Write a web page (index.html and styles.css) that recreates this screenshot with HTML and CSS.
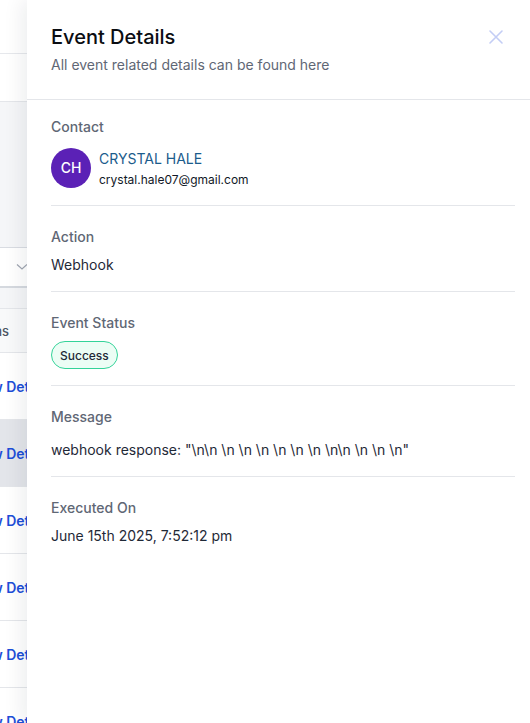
FILE: index.html
```html
<!DOCTYPE html>
<html>
<head>
<meta charset="utf-8">
<link rel="stylesheet" href="styles.css">
</head>
<body>
<div class="page">
  <div class="bg">
    <div class="bg-top"></div>
    <div class="bg-filter"></div>
    <div class="bg-gray"></div>
    <div class="bg-select">
      <svg class="chev" width="12" height="8" viewBox="0 0 12 8"><path d="M1 1.5 L6 6 L11 1.5" fill="none" stroke="#a0a6b1" stroke-width="1.2"/></svg>
    </div>
    <div class="bg-band"></div>
    <div class="bg-head"><span class="th">Actions</span></div>
    <div class="bg-row"><span class="link">View Details</span></div>
    <div class="bg-row hover"><span class="link">View Details</span></div>
    <div class="bg-row"><span class="link">View Details</span></div>
    <div class="bg-row"><span class="link">View Details</span></div>
    <div class="bg-row"><span class="link">View Details</span></div>
    <div class="bg-row"><span class="link">View Details</span></div>
  </div>
  <div class="panel">
    <div class="header">
      <div class="header-text">
        <div class="title">Event Details</div>
        <div class="subtitle">All event related details can be found here</div>
      </div>
      <svg class="close" width="16" height="16" viewBox="0 0 16 16"><path d="M2 2 L14 14 M14 2 L2 14" stroke="#c3cdf5" stroke-width="1.6" stroke-linecap="round"/></svg>
    </div>
    <div class="body">
      <div class="section first">
        <div class="label">Contact</div>
        <div class="contact">
          <div class="avatar">CH</div>
          <div class="contact-info">
            <div class="name">CRYSTAL HALE</div>
            <div class="email">crystal.hale07@gmail.com</div>
          </div>
        </div>
      </div>
      <div class="section">
        <div class="label">Action</div>
        <div class="value">Webhook</div>
      </div>
      <div class="section">
        <div class="label">Event Status</div>
        <div class="badge-wrap"><span class="badge">Success</span></div>
      </div>
      <div class="section">
        <div class="label">Message</div>
        <div class="value msg">webhook response: "\n\n \n \n \n \n \n \n \n\n \n \n \n"</div>
      </div>
      <div class="section last">
        <div class="label">Executed On</div>
        <div class="value">June 15th 2025, 7:52:12 pm</div>
      </div>
    </div>
  </div>
</div>
</body>
</html>
```
FILE: styles.css
```css
* { box-sizing: border-box; }
html, body { margin: 0; padding: 0; }
body {
  width: 530px;
  height: 723px;
  overflow: hidden;
  font-family: Inter, "Liberation Sans", sans-serif;
  background: #ffffff;
}
.page {
  display: flex;
  height: 723px;
}
.bg {
  width: 27px;
  flex: none;
  overflow: hidden;
  display: flex;
  flex-direction: column;
  background: #ffffff;
}
.bg-top { height: 54px; flex: none; border-bottom: 1px solid #e6e8ec; }
.bg-filter { height: 48px; flex: none; border-bottom: 1px solid #e4e6ea; }
.bg-gray { height: 146px; flex: none; background: #f5f6f8; border-bottom: 1px solid #d9dce2; }
.bg-select { height: 40px; flex: none; border-bottom: 2px solid #d5d9df; display: flex; align-items: center; }
.chev { margin-left: 16px; flex: none; }
.bg-band { height: 21px; flex: none; background: #f5f6f8; border-bottom: 1px solid #e4e6ea; }
.bg-head {
  height: 44px; flex: none; background: #f8f9fa; border-bottom: 1px solid #e4e6ea;
  display: flex; align-items: center;
}
.th {
  margin-left: -38px; white-space: nowrap; font-size: 13px; font-weight: 500; color: #4b5563;
}
.bg-row {
  height: 67px; flex: none; border-bottom: 1px solid #e4e6ea;
  display: flex; align-items: center;
}
.bg-row.hover { background: #e3e5ea; }
.link {
  margin-left: -31px; white-space: nowrap; font-size: 14px; font-weight: 600; color: #1d4ed8;
}
.panel {
  flex: 1;
  position: relative;
  z-index: 1;
  background: #ffffff;
  box-shadow: -6px 0 18px rgba(16, 24, 40, 0.07);
  display: flex;
  flex-direction: column;
}
.header {
  display: flex;
  justify-content: space-between;
  align-items: flex-start;
  padding: 23px 26px 24px 24px;
  border-bottom: 1px solid #e4e6ea;
}
.title {
  font-size: 20px;
  line-height: 28px;
  font-weight: 500;
  color: #0b0d12;
}
.subtitle {
  margin-top: 4px;
  font-size: 14px;
  line-height: 20px;
  color: #5f6775;
}
.close { margin-top: 6px; }
.body {
  padding: 0 15px 0 24px;
}
.section {
  padding: 21px 0 16px;
  border-bottom: 1px solid #e4e6ea;
}
.section.first { padding-top: 17px; padding-bottom: 17px; }
.section.last { border-bottom: none; }
.label {
  font-size: 14px;
  line-height: 20px;
  font-weight: 500;
  color: #5f6775;
}
.value {
  margin-top: 8px;
  font-size: 14px;
  line-height: 20px;
  color: #1f2937;
}
.value.msg { margin-top: 13px; }
.contact {
  margin-top: 10px;
  display: flex;
  align-items: center;
  gap: 8px;
}
.avatar {
  width: 40px;
  height: 40px;
  border-radius: 50%;
  background: #5b21b6;
  color: #ffffff;
  font-size: 14px;
  font-weight: 500;
  display: flex;
  align-items: center;
  justify-content: center;
  flex: none;
}
.contact-info { display: flex; flex-direction: column; gap: 3px; margin-top: 2px; }
.name {
  font-size: 14px;
  line-height: 20px;
  color: #1b5c8c;
}
.email {
  font-size: 12px;
  line-height: 16px;
  color: #111827;
}
.badge-wrap { margin-top: 8px; display: flex; }
.badge {
  height: 28px;
  padding: 0 8px;
  border: 1px solid #34d399;
  background: #ecfdf5;
  border-radius: 14px;
  font-size: 12px;
  font-weight: 500;
  color: #1f2937;
  display: flex;
  align-items: center;
}
```
